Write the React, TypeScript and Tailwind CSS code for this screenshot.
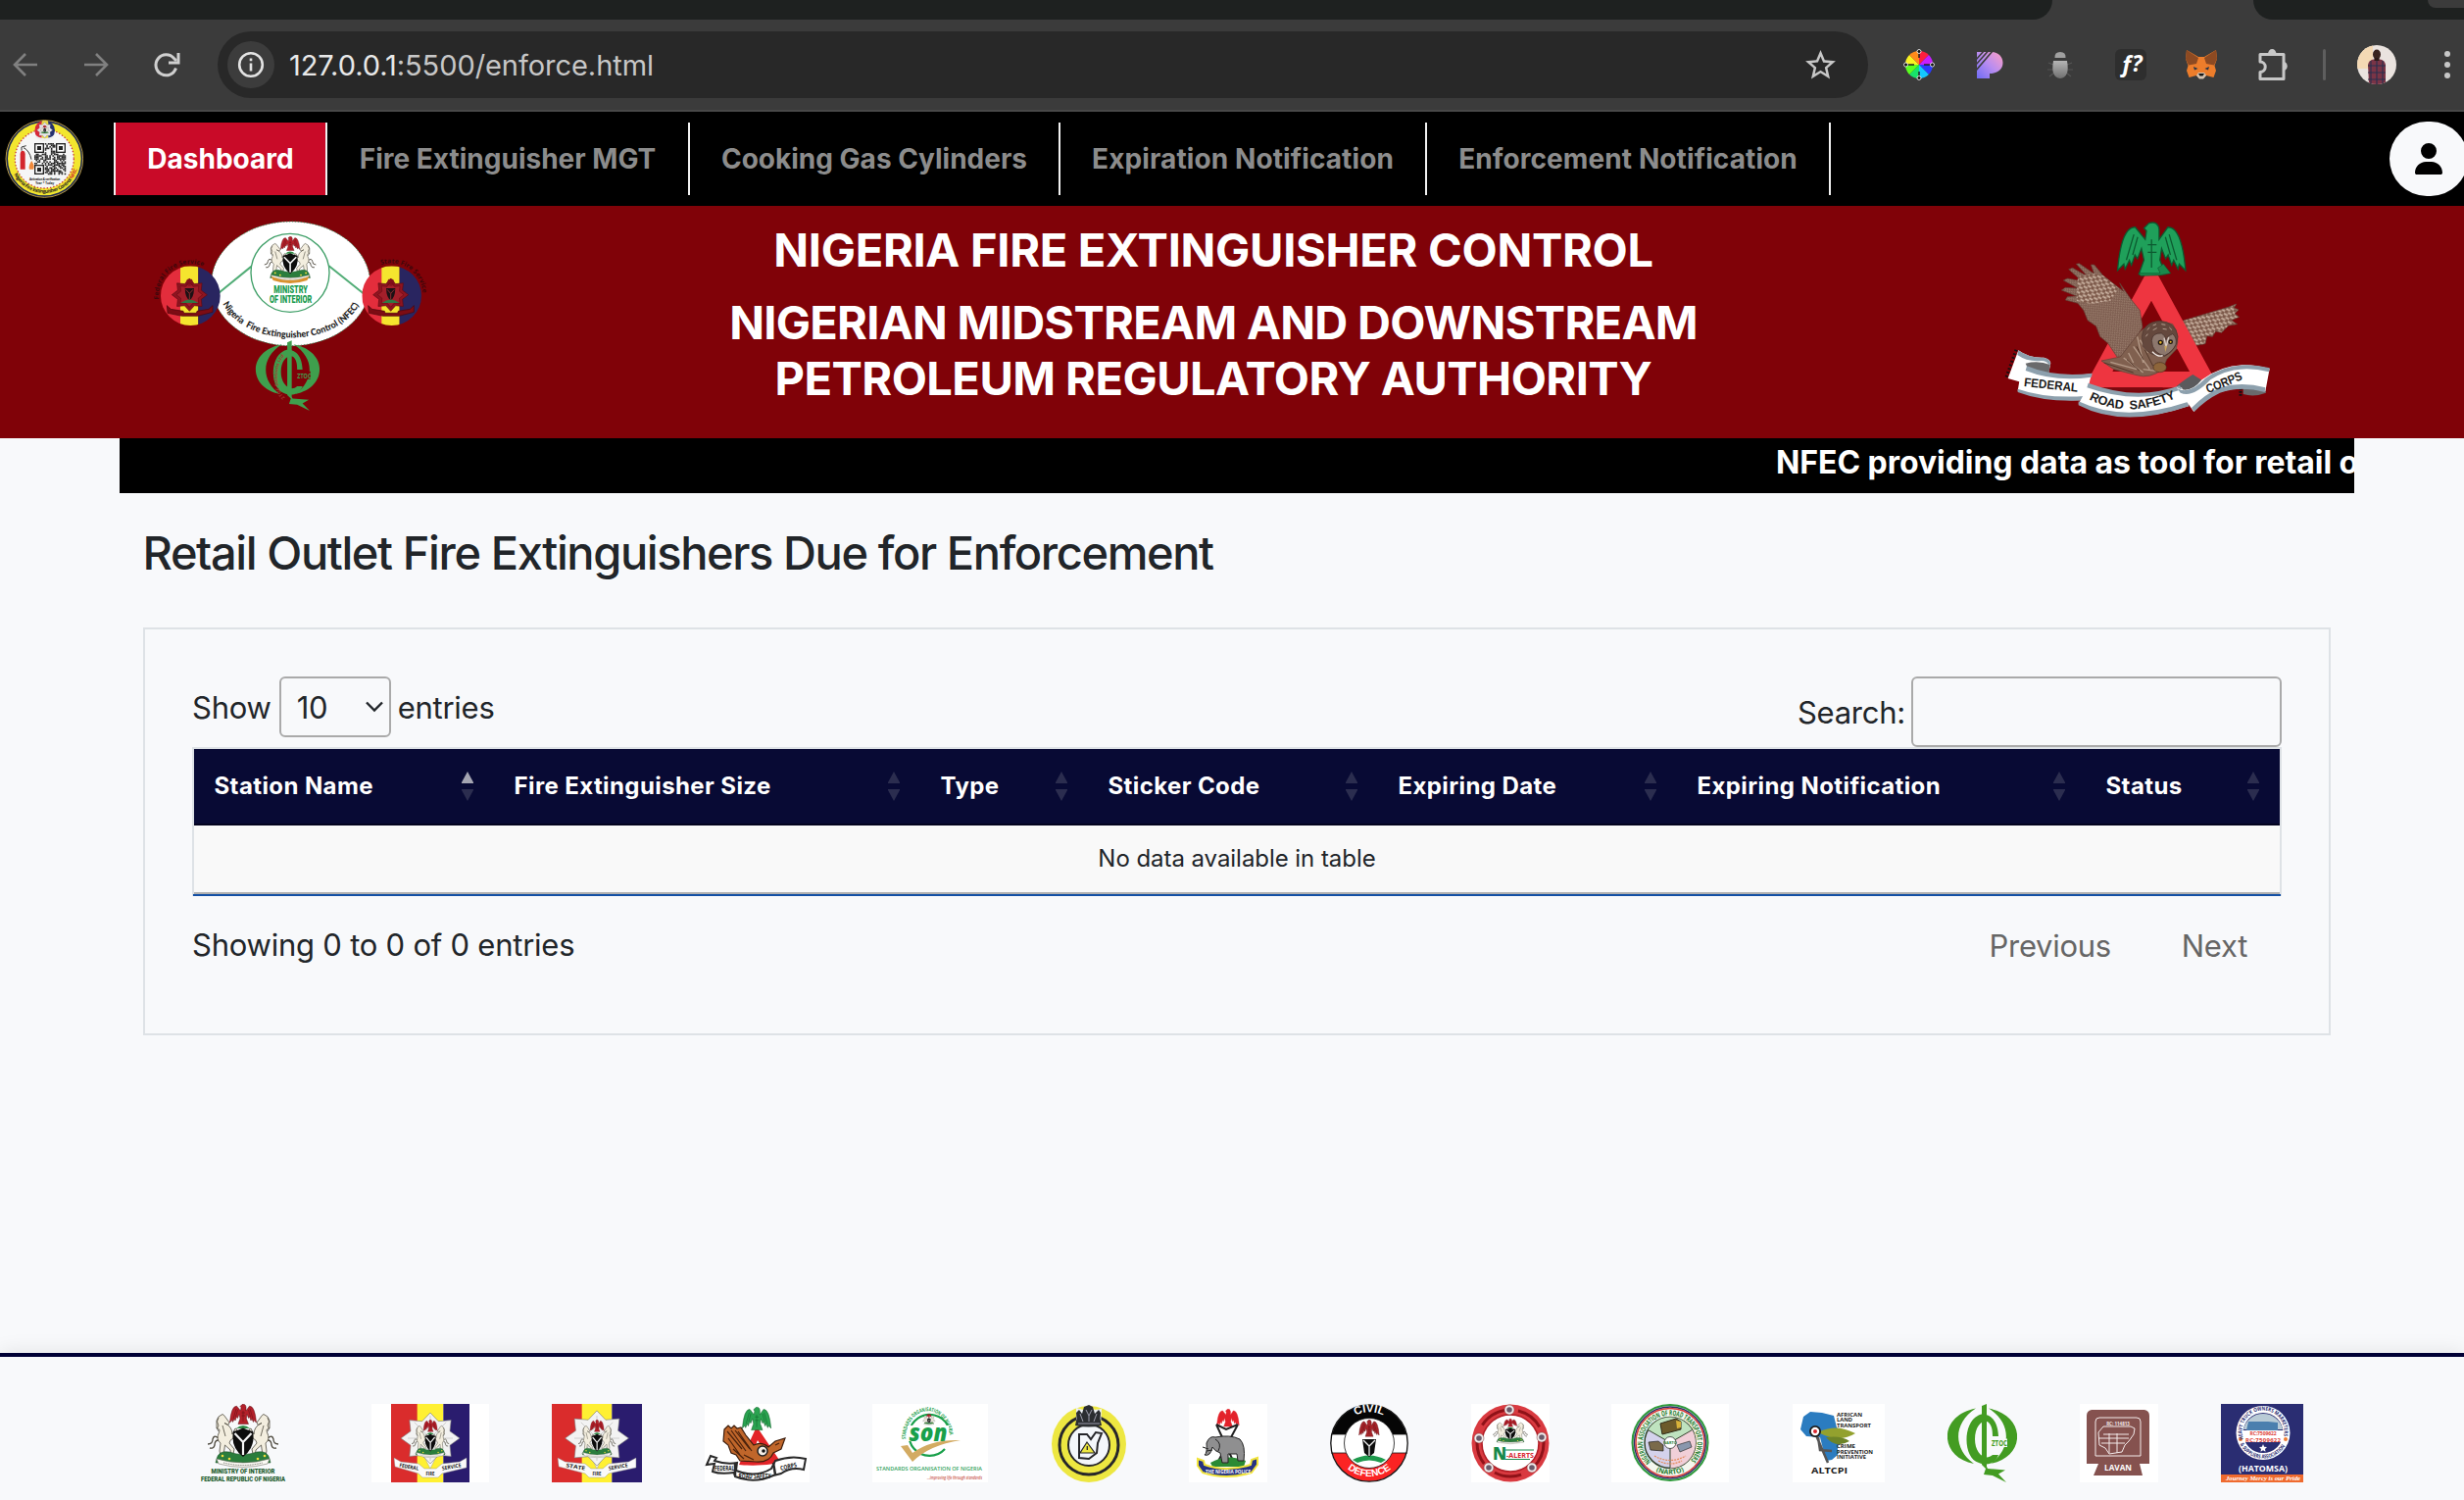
import type { ReactNode } from "react";
import { FaUser } from "react-icons/fa6";
import { MdStarBorder } from "react-icons/md";

const heading = { textAnchor: "middle" as const, fontFamily: "Open Sans, sans-serif", fontWeight: 700 };

/* ---------- shared emblem parts ---------- */

function Eagle({ color = "#b3202a", line = "#5c0c12" }: { color?: string; line?: string }) {
  return (
    <g stroke={line} strokeWidth="0.5">
      <path
        fill={color}
        d="M35 2.600 L37 .6 Q40.500 -.4 41 3 L41 7 L44.500 2.200 Q50 2 51.500 19 L49 16.500 L48.500 18.500 L46.800 15 L46 17 L44.600 13 L43.600 14.500 L42 10.500 L41.300 15 L43.500 20.500 H33 L35 15 L34 10.500 L32.400 14.500 L31.400 13 L30 17 L29.200 15 L27.500 18.500 L27 16.500 L24.500 19 Q26 2 31.500 2.200 L35.500 7 L36 3.600Z"
      />
      <path fill="none" d="M31 5 L28 15 M32.500 6 L30.500 13 M45 5 L48 15 M43.500 6 L45.500 13 M38 7 V18 M36.500 9 H40 M36.500 12 H40" />
    </g>
  );
}

function Horse() {
  return (
    <g stroke="#4d493e" strokeWidth="0.8" fill="#f3eedf" strokeLinejoin="round">
      <path fill="none" strokeWidth="1.300" d="M13 35 Q8 31 7 36 Q7 41 2 41 M13 37 Q9 37 9 42 Q8 46 4 45" />
      <path d="M11 17 L13 13 L17 10.500 L18.500 11.500 L24 19 L23 21.500 L19 19.500 Q27 23 27 31 L30 25 L32 26 L28 35 Q24 37 24 40 L29 46 L28 51 L25.500 51 L25 47 L19.500 42 L18.500 49 L19 55 H15.500 L14 48 L15 40 Q10 36 13.500 29 Q15 25 11 25Z" />
      <path fill="none" d="M13 14 Q10 18 13 22 Q10 25 13 28 M17 22 L20 33" />
    </g>
  );
}

function Coat({ eagle = "#b3202a" }: { eagle?: string }) {
  return (
    <g>
      <Horse />
      <g transform="translate(76 0) scale(-1 1)">
        <Horse />
      </g>
      <path d="M11 56 Q13 47 24 49 Q38 54 52 49 Q63 47 65 56 L66 60 H10Z" fill="#2a7d3c" stroke="#174a22" strokeWidth="0.5" />
      <g fill="#f2dc3c">
        <circle cx="17" cy="53" r="1.300" />
        <circle cx="24" cy="56" r="1.300" />
        <circle cx="53" cy="56" r="1.300" />
        <circle cx="60" cy="53" r="1.300" />
      </g>
      <path d="M31 25 Q38 19 45 25Z" fill="#2f8b47" />
      <path d="M28 28 Q33 27 38 24.500 Q43 27 48 28 Q51 44 38 54 Q25 44 28 28Z" fill="#0c0c0c" />
      <path d="M29.500 30 L38 39 L46.500 30 M38 38 V52" stroke="#f4f4f4" strokeWidth="2.200" fill="none" />
      <path d="M11 56 Q38 64 65 56 L63 61 Q38 68 13 61Z" fill="#fbfaf5" stroke="#77756b" strokeWidth="0.6" />
      <path d="M18 60 Q38 65 58 60" fill="none" stroke="#55534b" strokeWidth="0.8" strokeDasharray="1 0.7" />
      <Eagle color={eagle} />
    </g>
  );
}

function starPoints(cx: number, cy: number, rx: number, ry: number, n: number) {
  return Array.from({ length: n * 2 }, (_, i) => {
    const a = (Math.PI * i) / n - Math.PI / 2;
    const k = i % 2 ? 0.72 : 1;
    return `${(cx + Math.cos(a) * rx * k).toFixed(1)},${(cy + Math.sin(a) * ry * k).toFixed(1)}`;
  }).join(" ");
}

function Ztoc({ color }: { color: string }) {
  return (
    <g fill={color}>
      <path d="M29 4.500 C-10 12 -9 54 27 61 C6 46 5 20 29 4.500Z" />
      <path d="M42 4.500 C81 12 80 54 44 61 C65 46 66 20 42 4.500Z" />
      <path d="M52 33 C51 8 34 9 31 12 C15 20 16 56 32 60 C42 64 49 60 52 52 L46 52 C38 59 28 50 28 36 C28 20 38 15 42 19 C45 22 46 26 46 33Z" />
      <path d="M35 2 L40 0 V64 L41 66 L59 67.500 L52 71.500 L60 80 L46 73 L37 72 L39 66 L35 62Z" />
    </g>
  );
}

/* ---------- browser chrome ---------- */

function ColorWheel() {
  const colors = ["#ff1f3d", "#c61fff", "#2a3bff", "#14c8ff", "#17e36a", "#5bff1f", "#f9f321", "#ff8a1a"];
  return (
    <svg width="32" height="32" viewBox="0 0 32 32">
      {colors.map((c, i) => {
        const p = (k: number) => {
          const a = ((k * 45 - 90) * Math.PI) / 180;
          return `${16 + Math.cos(a) * 14} ${16 + Math.sin(a) * 14}`;
        };
        return <path key={c} d={`M16 16 L${p(i)} A14 14 0 0 1 ${p(i + 1)}Z`} fill={c} />;
      })}
      <path d="M16 3 V9 M16 23 V29 M3 16 H11 M21 16 H29" stroke="#222" strokeWidth="1.500" />
      {[[16, 2.500], [16, 29.500], [2.500, 16], [29.500, 16]].map(([x, y]) => (
        <circle key={`${x}-${y}`} cx={x} cy={y} r="2" fill="#111" stroke="#eee" strokeWidth="0.9" />
      ))}
    </svg>
  );
}

function BrowserBar() {
  return (
    <div className="h-[114px] bg-[#3b3b3b] border-b-2 border-[#484848]">
      <div className="flex h-5 justify-between overflow-hidden">
        <div className="w-[2094px] rounded-br-[22px] bg-[#1e2120]" />
        <div className="flex w-[215px] justify-end rounded-bl-[22px] bg-[#1e2120]">
          <div className="h-2 w-[37px] rounded-bl-[16px] bg-[#3b3b3b]" />
        </div>
      </div>
      <div className="flex h-[92px] items-center">
        <svg className="ml-3" width="172" height="28" viewBox="0 0 172 28" fill="none" strokeWidth="2.600">
          <path d="M26 14 H3 M14 3 L3 14 L14 25" stroke="#808080" />
          <path d="M74 14 H97 M86 3 L97 14 L86 25" stroke="#808080" />
          <path d="M167.500 17.500 A10.500 10.500 0 1 1 165.500 7.500 L168 10" stroke="#cfcfcf" strokeWidth="3" />
          <path d="M170 2 V12 H160" stroke="#cfcfcf" strokeWidth="3" />
        </svg>
        <div className="ml-[38px] flex h-[68px] w-[1684px] items-center rounded-full bg-[#282828] pr-[30px] pl-[10px]">
          <div className="flex size-12 items-center justify-center rounded-full bg-[#3c3c3c]">
            <svg width="28" height="28" viewBox="0 0 28 28" fill="none" stroke="#e3e3e3" strokeWidth="2.600">
              <circle cx="14" cy="14" r="11.800" />
              <path d="M14 12.500 V20.500 M14 7.500 V10.300" />
            </svg>
          </div>
          <div className="ml-[15px] text-[29px] leading-none tracking-[-0.06px] whitespace-nowrap text-[#c7c7c7]">
            <span className="text-[#e8e8e8]">127.0.0.1</span>:5500/enforce.html
          </div>
          <MdStarBorder className="ml-auto size-[37px] text-[#c7c7c7]" />
        </div>
        <div className="ml-[36px] flex flex-1 items-center">
          <ColorWheel />
          <svg className="ml-[43px]" width="27" height="27" viewBox="0 0 27 27">
            <defs>
              <linearGradient id="pg" x1="0" y1="1" x2="1" y2="0">
                <stop offset="0" stopColor="#6f6cf5" />
                <stop offset="0.500" stopColor="#b98df0" />
                <stop offset="1" stopColor="#ff9fc4" />
              </linearGradient>
            </defs>
            <path d="M0 0 H15 C22 0 26.500 5 26.500 11 C26.500 18 21 22 13 22 V27 H0Z" fill="url(#pg)" />
            <path d="M-1 8 L7 -1 M-1 13 L11.500 -1 M-1 19 L16 -1" stroke="#3b3b3b" strokeWidth="1.600" />
          </svg>
          <svg className="ml-[43px]" width="30" height="30" viewBox="0 0 30 30">
            <defs>
              <linearGradient id="bg" x1="0" y1="0" x2="0" y2="1">
                <stop offset="0" stopColor="#b5b5b5" />
                <stop offset="1" stopColor="#707070" />
              </linearGradient>
            </defs>
            <path d="M3 13 L8 15 M2 20 H8 M4 27 L9 23 M27 13 L22 15 M28 20 H22 M26 27 L21 23" stroke="#555" strokeWidth="1.200" />
            <path d="M9.500 8 Q9 2 15 2 Q21 2 20.500 8Z" fill="#a0a0a0" />
            <path d="M8 11 H22 Q25 28 15 29 Q5 28 8 11Z" fill="url(#bg)" />
          </svg>
          <div className="ml-[41px] flex size-8 items-center justify-center rounded-md bg-[#2e2e2e] font-['Open_Sans',sans-serif] text-[23px] leading-none font-bold tracking-[-1px] text-white italic">
            <span className="-mt-1">ƒ?</span>
          </div>
          <svg className="ml-10" width="32" height="30" viewBox="0 0 32 30">
            <path d="M1 0 L13 7 H19 L31 0 L32 9 L29.500 16 L31 21 L28.500 28 L21 26 L18 29 H14 L11 26 L3.500 28 L1 21 L2.500 16 L0 9Z" fill="#ed7d2b" />
            <path d="M1 0 L13 8 L11 14 L3 15.500 L0 9Z M31 0 L19 8 L21 14 L29 15.500 L32 9Z" fill="#8d4a22" />
            <path d="M8 17 L12.500 19 L9 20.500Z M24 17 L19.500 19 L23 20.500Z" fill="#23344a" />
            <path d="M11 26 L13 23 H19 L21 26 L18 29.500 H14Z" fill="#d4c2b0" />
            <path d="M13 24 H19 L17.500 26.500 H14.500Z" fill="#161616" />
          </svg>
          <svg className="ml-[41px]" width="34" height="34" viewBox="0 0 34 34">
            <path
              d="M3 6.500 H27 V31.500 H3 V24.500 A5 5 0 0 0 3 14Z"
              fill="none"
              stroke="#c7c7c7"
              strokeWidth="3"
              strokeLinejoin="round"
            />
            <path d="M11 6 A4.200 5 0 0 1 19.500 6Z M28 14 A5 5 0 0 1 28 23Z" fill="#c7c7c7" />
          </svg>
          <div className="ml-[33px] h-8 w-[3px] rounded-full bg-[#5e5e5e]" />
          <svg className="ml-[32px]" width="40" height="40" viewBox="0 0 40 40">
            <defs>
              <clipPath id="av">
                <circle cx="20" cy="20" r="20" />
              </clipPath>
            </defs>
            <g clipPath="url(#av)">
              <rect width="40" height="40" fill="#eae3df" />
              <rect width="16" height="24" fill="#f4d9b4" />
              <path d="M12 40 L11 20 Q12 15 17 14.500 H23 Q28 15 29 20 L29 40Z" fill="#7a3446" />
              <path d="M14 16 V40 M20 15 V40 M26 16 V40 M11 21 H29 M11 28 H29 M11 35 H29" stroke="#27304f" strokeWidth="1.100" />
              <ellipse cx="20" cy="9.500" rx="4" ry="5" fill="#3a241f" />
              <path d="M17.500 13 H22.500 V16 H17.500Z" fill="#2c1a17" />
            </g>
          </svg>
          <div className="ml-[49px] flex flex-col gap-[5px]">
            <div className="size-[6px] rounded-full bg-[#c7c7c7]" />
            <div className="size-[6px] rounded-full bg-[#c7c7c7]" />
            <div className="size-[6px] rounded-full bg-[#c7c7c7]" />
          </div>
        </div>
      </div>
    </div>
  );
}

/* ---------- site navigation ---------- */

// Pseudo-random but stable module pattern of the badge's QR code.
const qrCells = Array.from({ length: 21 * 21 }, (_, i) => {
  const x = i % 21;
  const y = Math.floor(i / 21);
  const inFinder = (x < 7 && y < 7) || (x > 13 && y < 7) || (x < 7 && y > 13);
  return !inFinder && (x * 7 + y * 13 + x * y * 5 + ((x * x * 3) ^ (y * 11))) % 5 < 3 ? [x, y] : null;
}).filter((c): c is number[] => c !== null);

function NavBadge() {
  return (
    <svg className="ml-[5px] shrink-0" width="80" height="84" viewBox="15 30 240 252">
      <circle cx="136" cy="156" r="118" fill="#1d2a52" stroke="#b99a42" strokeWidth="3" />
      <circle cx="136" cy="156" r="112" fill="#f2e62f" />
      <circle cx="136" cy="156" r="90" fill="#f6f6f6" stroke="#c8343c" strokeWidth="4" strokeDasharray="4 6" />
      <defs>
        <clipPath id="nb">
          <circle cx="137" cy="69" r="31" />
        </clipPath>
        <path id="nbt" d="M43 203 A105 105 0 0 0 236 190" />
      </defs>
      <g clipPath="url(#nb)">
        <rect x="106" y="38" width="22" height="62" fill="#d8283a" />
        <rect x="128" y="38" width="20" height="62" fill="#e8d84a" />
        <rect x="148" y="38" width="22" height="62" fill="#24306e" />
      </g>
      <polygon points={starPoints(137, 68, 24, 24, 8)} fill="#e9e9ee" stroke="#777" />
      <g transform="translate(121 53) scale(.42)">
        <Coat />
      </g>
      <path d="M108 84 Q137 104 166 84 L164 92 Q137 110 110 92Z" fill="#eee" />
      <g fill="#222">
        {qrCells.map(([x, y]) => (
          <rect key={`${x}-${y}`} x={105 + x * 4.6} y={108 + y * 4.6} width="4.700" height="4.700" />
        ))}
      </g>
      {[[105, 108], [171, 108], [105, 174]].map(([x, y]) => (
        <g key={`${x}-${y}`}>
          <rect x={x + 2} y={y + 2} width="26" height="26" fill="#fff" stroke="#222" strokeWidth="4" />
          <rect x={x + 9} y={y + 9} width="12" height="12" fill="#222" />
        </g>
      ))}
      <path d="M62 188 V142 Q62 132 69 131 Q77 132 77 142 V188Z" fill="#d3262c" />
      <path d="M66 131 V120 L80 116 M72 122 Q90 130 96 158" fill="none" stroke="#333" strokeWidth="3" />
      <path d="M90 188 Q86 176 97 162 Q108 180 102 188Z" fill="#f08a3c" />
      <g {...heading} fontSize="9" fill="#222">
        <text x="137" y="222" textLength="94">Activation &amp; verification</text>
        <text x="137" y="234">Year * Today</text>
      </g>
      <text fontFamily="Open Sans, sans-serif" fontWeight="700" fontSize="15" fill="#222">
        <textPath href="#nbt" textLength="248">
          Nigeria Fire Extinguisher Control <tspan fill="#d02a2a">NFEC</tspan>
        </textPath>
      </text>
    </svg>
  );
}

function NavItem({ className, children }: { className: string; children: ReactNode }) {
  return (
    <div className={`flex h-[74px] shrink-0 items-center justify-center border-r-2 border-[#f1f1f1] text-[28px] font-bold whitespace-nowrap ${className}`}>
      {children}
    </div>
  );
}

function NavBar() {
  return (
    <div className="flex h-24 items-center overflow-hidden bg-black text-[#8c8c8c]">
      <NavBadge />
      <NavItem className="ml-[31px] w-[218px] border-l-2 bg-[#c90a28] text-white">Dashboard</NavItem>
      <NavItem className="w-[370px]">Fire Extinguisher MGT</NavItem>
      <NavItem className="w-[378px]">Cooking Gas Cylinders</NavItem>
      <NavItem className="w-[374px] tracking-[0.1px]">Expiration Notification</NavItem>
      <NavItem className="w-[412px] tracking-[0.1px]">Enforcement Notification</NavItem>
      <div className="ml-[570px] flex h-[76px] w-20 shrink-0 items-center justify-center rounded-full bg-[#f8f9fb]">
        <FaUser className="h-8 w-7 text-black" />
      </div>
    </div>
  );
}

/* ---------- page header ---------- */

function FireRoundel({ cx, id, label, arc, len }: { cx: number; id: string; label: string; arc: string; len: number }) {
  return (
    <g>
      <defs>
        <clipPath id={id}>
          <circle cx={cx} cy="275" r="91" />
        </clipPath>
        <path id={`${id}-arc`} d={arc} />
      </defs>
      <g clipPath={`url(#${id})`}>
        <rect x={cx - 91} y="184" width="62" height="182" fill="#e32d3c" />
        <rect x={cx - 31} y="184" width="55" height="182" fill="#f5e52e" />
        <rect x={cx + 24} y="184" width="68" height="182" fill="#292560" />
      </g>
      <polygon points={starPoints(cx - 3, 272, 54, 50, 8)} fill="#8f1420" stroke="#5c0a10" strokeWidth="2" />
      <polygon points={starPoints(cx - 3, 272, 40, 38, 8)} fill="#a31f2a" stroke="#6b0c14" strokeWidth="2" />
      <path d={`M${cx - 17} 252 H${cx + 11} Q${cx + 10} 282 ${cx - 3} 288 Q${cx - 16} 282 ${cx - 17} 252Z`} fill="#1c1114" />
      <path d={`M${cx - 14} 256 L${cx - 3} 268 L${cx + 8} 256 M${cx - 3} 268 V286`} stroke="#8f2a30" strokeWidth="3" fill="none" />
      <path d={`M${cx - 30} 297 Q${cx - 3} 276 ${cx + 24} 297Z`} fill="#2f7a44" />
      <g transform={`translate(${cx - 34} 222) scale(.82 1.1)`}>
        <Eagle color="#8c1420" />
      </g>
      <path
        d={`M${cx - 72} 305 L${cx - 60} 316 L${cx - 22} 322 L${cx - 20} 328 H${cx + 18} L${cx + 20} 322 L${cx + 56} 316 L${cx + 68} 305 V325 L${cx + 22} 337 H${cx - 26} L${cx - 70} 328Z`}
        fill="#7d0c14"
        stroke="#4a060a"
        strokeWidth="2"
      />
      <text fontFamily="Open Sans, sans-serif" fontWeight="700" fontSize="20" fill="#3c070b">
        <textPath href={`#${id}-arc`} textLength={len}>
          {label}
        </textPath>
      </text>
    </g>
  );
}

function NfecLogo() {
  return (
    <svg className="ml-[140px] shrink-0" width="320" height="220" viewBox="0 0 960 660">
      <defs>
        <path id="nfec-arc" d="M262 300 C335 438 610 438 682 298" />
        <path id="ztoc-arc" d="M452 586 C420 560 420 480 456 454" />
      </defs>
      <ellipse cx="470" cy="238" rx="243" ry="190" fill="#fff" stroke="#2f8b57" strokeWidth="3" strokeDasharray="4 5" />
      <path d="M352 183 L248 268 M586 183 L692 268" stroke="#52ad77" strokeWidth="6" />
      <circle cx="468" cy="205" r="120" fill="#fff" stroke="#3d9e66" strokeWidth="4" />
      <g transform="translate(385 93) scale(2.190 2.120)">
        <Coat />
      </g>
      <path d="M410 215 Q468 240 526 215 L520 228 Q468 246 416 228Z" fill="#d8912e" />
      <g {...heading} fill="#169a4c" fontFamily="Roboto, sans-serif" fontSize="30" fontWeight="900">
        <text x="470" y="266" textLength="104" lengthAdjust="spacingAndGlyphs">MINISTRY</text>
        <text x="470" y="297" textLength="130" lengthAdjust="spacingAndGlyphs">OF INTERIOR</text>
      </g>
      <text fontFamily="Lato, sans-serif" fontWeight="900" fontSize="28" fill="#1b1b1b" xmlSpace="preserve">
        <textPath href="#nfec-arc" textLength="486" lengthAdjust="spacingAndGlyphs">
          {"Nigeria\u00a0 Fire Extinguisher Control (NFEC)"}
        </textPath>
      </text>
      <FireRoundel cx={163} id="fed" label="Federal Fire Service" arc="M66 286 A98 98 0 0 1 212 190" len={205} />
      <FireRoundel cx={779} id="state" label="State Fire Service" arc="M746 180 A98 98 0 0 1 874 276" len={178} />
      <g transform="translate(363 412) scale(2.750 2.690)">
        <Ztoc color="#3f9f4d" />
      </g>
      <rect x="492" y="506" width="38" height="24" fill="#800208" />
      <text x="511" y="527" {...heading} fontSize="23" fill="#3f9f4d" textLength="42" lengthAdjust="spacingAndGlyphs">ZTOC</text>
      <text fontFamily="Open Sans, sans-serif" fontWeight="700" fontSize="14" fill="#a03c30">
        <textPath href="#ztoc-arc" textLength="138">ZTOC Solutions Ltd</textPath>
      </text>
    </svg>
  );
}

function FrscLogo() {
  const feather = { stroke: "#5f4136", strokeWidth: 2, strokeLinejoin: "round" as const };
  return (
    <svg className="mr-[174px] shrink-0" width="320" height="220" viewBox="0 0 960 660">
      <defs>
        <path id="frsc-arc" d="M334 592 Q460 655 604 586" />
        <pattern id="barring" width="22" height="16" patternUnits="userSpaceOnUse" patternTransform="rotate(28)">
          <rect width="22" height="16" fill="#7d5a4b" />
          <path d="M0 4 H13 M10 12 H22" stroke="#cdb6a5" strokeWidth="5" />
        </pattern>
        <pattern id="speckle" width="10" height="10" patternUnits="userSpaceOnUse" patternTransform="rotate(50)">
          <rect width="10" height="10" fill="#7d5d50" />
          <path d="M0 3 H6 M5 8 H10" stroke="#ab8f7e" strokeWidth="2" />
        </pattern>
      </defs>
      {/* far wing */}
      <path
        d="M590 375 L625 350 L760 310 L785 300 L778 312 L792 318 L780 330 L794 340 L770 350 L788 362 L762 366 L740 388 L722 384 L712 400 L695 398 L690 422 L655 428 L590 440Z"
        fill="url(#barring)"
        {...feather}
      />
      {/* triangle */}
      <path fillRule="evenodd" d="M505 213 H546 L716 525 L690 556 H322 L332 532Z M525 290 L406 507 H642Z" fill="#ee3540" />
      <path d="M360 556 H560 V566 H380Z" fill="#7a0a10" />
      {/* green eagle */}
      <g transform="translate(233 48) scale(7.700 7.850)">
        <Eagle color="#1fa05a" line="#0c5a30" />
      </g>
      <path d="M486 206 H552 L545 190 L562 178 L584 206 L552 212 L492 214Z" fill="#1a8a4c" stroke="#0c5a30" strokeWidth="2" />
      {/* near wing */}
      <path
        d="M428 236 L462 285 L490 320 L498 372 L480 400 L450 460 L420 462 L392 420 L368 400 L356 368 L330 350 L318 320 L300 298 L262 288 L268 278 L296 276 L250 258 L262 250 L300 252 L256 228 L268 222 L312 230 L272 194 L284 190 L330 216 L295 178 L304 176 L350 208 L340 180 L350 180 L378 214 L440 262Z"
        fill="url(#speckle)"
        {...feather}
      />
      <path d="M300 215 L350 208 L378 214 L425 252 L400 290 L340 300 L296 290Z" fill="url(#barring)" />
      {/* body and head */}
      <path d="M372 474 L430 462 L490 385 Q540 340 590 362 Q615 395 600 440 L572 470 L560 500 Q520 530 480 518 L410 500 Z" fill="#80604f" {...feather} />
      <path
        d="M400 478 L480 500 M440 465 L500 510 M470 430 L520 500 M490 410 L515 450 M455 450 L470 480 M482 400 L500 480 M500 500 L545 506"
        stroke="#b49a88"
        strokeWidth="4"
      />
      <path d="M380 480 L470 510 M450 470 L490 505 M480 430 L500 470 M505 440 L530 490" stroke="#513528" strokeWidth="3" />
      <path d="M496 400 Q500 356 550 352 Q600 356 606 400 Q604 440 566 460 Q520 462 500 430Z" fill="#64483d" stroke="#4f372f" strokeWidth="2" />
      <path d="M512 380 L520 372 M530 366 L540 362 M556 362 L568 364 M580 372 L588 380 M508 400 L514 392 M530 380 L542 374 M560 376 L572 378" stroke="#b79f90" strokeWidth="3" />
      <path d="M526 412 Q528 388 556 390 Q568 396 570 410 Q574 396 590 392 Q604 402 600 424 Q590 446 566 458 Q528 452 526 412Z" fill="#8c776d" stroke="#3f2b25" strokeWidth="2" />
      <path d="M564 404 L570 432 L578 402" stroke="#d9cdc5" strokeWidth="4" fill="none" />
      <circle cx="553" cy="418" r="6" fill="#e6b52d" stroke="#1c1512" strokeWidth="4" />
      <circle cx="584" cy="416" r="5" fill="#e6b52d" stroke="#1c1512" strokeWidth="4" />
      <path d="M565 428 L573 428 L568 448Z" fill="#caa55a" />
      <path d="M528 446 Q546 464 560 458" stroke="#f3ede8" strokeWidth="4" fill="none" />
      <ellipse cx="551" cy="494" rx="20" ry="15" fill="#8d653a" stroke="#4a3020" strokeWidth="3" strokeDasharray="4 2" />
      {/* ribbon */}
      <path d="M118 442 Q150 466 196 464 Q220 470 216 486 L210 514 L140 498 L128 540 L86 528Z" fill="#fff" />
      <path d="M118 442 Q150 466 196 464 Q222 470 215 490 Q205 474 188 474 Q146 478 115 456Z" fill="#8da0ad" />
      <path d="M140 482 Q180 472 215 486 L211 516 Q170 505 146 496Z" fill="#6a6a6c" />
      <path d="M118 442 L86 532" stroke="#111" strokeWidth="9" strokeDasharray="5 7" transform="translate(-7 -2)" />
      <path d="M144 496 Q230 530 342 514 L322 594 Q200 600 116 566 L128 494Z" fill="#fff" />
      <path d="M144 490 Q230 526 344 512 L342 524 Q230 540 140 504Z M116 560 Q200 590 322 582 V595 Q200 602 116 570Z" fill="#8da0ad" />
      <path d="M690 540 L652 516 Q620 536 602 552 L640 600Z" fill="#5a5a5c" />
      <path d="M334 548 Q480 606 618 556 L640 612 Q440 680 302 606Z" fill="#fff" />
      <path d="M332 542 Q480 598 612 550 L618 562 Q480 610 328 556Z M302 598 Q440 665 636 600 L640 613 Q440 682 302 610Z" fill="#8da0ad" />
      <path d="M806 545 H870 L876 572 Q840 586 806 576Z" fill="#6a6a6c" />
      <path d="M798 558 V582" stroke="#111" strokeWidth="9" strokeDasharray="5 4" />
      <path d="M602 555 Q640 580 680 532 Q770 464 887 498 L874 568 Q800 548 735 570 Q690 590 655 630Z" fill="#fff" />
      <path d="M604 558 Q640 580 690 528 Q770 468 887 496 L885 508 Q780 482 706 532 Q650 590 614 572Z M874 556 L872 570 Q800 550 735 572 Q690 594 656 630 L648 618 Q690 576 735 556 Q800 536 874 556Z" fill="#8da0ad" />
      <g fontFamily="Liberation Sans, sans-serif" fontWeight="700" fill="#1c1c1c">
        <text x="134" y="552" fontSize="38" textLength="166" lengthAdjust="spacingAndGlyphs" transform="rotate(6 134 552)">FEDERAL</text>
        <text fontSize="38">
          <textPath href="#frsc-arc" textLength="276">{"ROAD\u00a0 SAFETY"}</textPath>
        </text>
        <text x="698" y="574" fontSize="38" textLength="116" lengthAdjust="spacingAndGlyphs" transform="rotate(-22 698 574)">CORPS</text>
      </g>
    </svg>
  );
}

function Header() {
  return (
    <header className="flex h-[237px] justify-between bg-[#800208]">
      <NfecLogo />
      <div className="-ml-[4px] pt-4 text-center text-[47px] leading-[57.6px] font-bold whitespace-nowrap text-white">
        <div className="tracking-[-0.3px]">NIGERIA FIRE EXTINGUISHER CONTROL</div>
        <div className="mt-4 tracking-[-0.72px]">NIGERIAN MIDSTREAM AND DOWNSTREAM</div>
        <div className="tracking-[-0.54px]">PETROLEUM REGULATORY AUTHORITY</div>
      </div>
      <FrscLogo />
    </header>
  );
}

/* ---------- table ---------- */

function SortIcon({ active }: { active?: boolean }) {
  return (
    <svg className="ml-auto shrink-0" width="12" height="30" viewBox="0 0 12 30">
      <path d="M6 0 L12 11 V12 H0 V11Z" fill={active ? "#a4a5b2" : "#2b2d4f"} />
      <path d="M0 18 H12 V19 L6 30 L0 19Z" fill="#2b2d4f" />
    </svg>
  );
}

const columns = [
  { label: "Station Name", width: "w-[306px]", active: true },
  { label: "Fire Extinguisher Size", width: "w-[435px]" },
  { label: "Type", width: "w-[171px]" },
  { label: "Sticker Code", width: "w-[296px]" },
  { label: "Expiring Date", width: "w-[305px]" },
  { label: "Expiring Notification", width: "w-[417px]" },
  { label: "Status", width: "w-[198px]" },
];

function TableCard() {
  return (
    <section className="mt-[47px] ml-[146px] h-[416px] w-[2232px] border-2 border-[#dee2e6] px-12 pt-12">
      <div className="flex h-[72px] justify-between text-[31px] leading-none tracking-[-0.25px]">
        <div className="flex h-[62px] items-center">
          Show
          <div className="ml-[8px] flex h-[62px] w-[114px] items-center justify-between rounded-md border-2 border-[#aaa] pr-[6px] pl-4">
            10
            <svg width="18" height="12" viewBox="0 0 18 12" fill="none" stroke="#212529" strokeWidth="2.400">
              <path d="M1 1.500 L9 9.500 L17 1.500" />
            </svg>
          </div>
          <span className="ml-[7px]">entries</span>
        </div>
        <div className="flex items-center">
          Search:
          <div className="ml-[6px] h-[72px] w-[378px] rounded-md border-2 border-[#aaa]" />
        </div>
      </div>
      <div className="h-[152px] border-x-2 border-t-2 border-[#dee2e6]">
        <div className="flex h-[78px] border-b-2 border-[#03031f] bg-[#080a34]">
          {columns.map((c) => (
            <div
              key={c.label}
              className={`flex shrink-0 items-center pr-[21px] pl-[20.5px] text-[24px] leading-none font-bold tracking-[0.4px] whitespace-nowrap text-white ${c.width}`}
            >
              {c.label}
              <SortIcon active={c.active} />
            </div>
          ))}
        </div>
        <div className="flex h-[70px] items-center justify-center border-b-2 border-[#b0b0b0] bg-[#f9f9f9] text-[24px] leading-none tracking-[-0.05px]">
          No data available in table
        </div>
        <div className="-mx-px h-[2px] bg-[#1450a5]" />
      </div>
      <div className="mt-[32px] flex items-start justify-between pr-[35px] text-[31px] leading-9 tracking-[-0.23px]">
        <div>Showing 0 to 0 of 0 entries</div>
        <div className="flex gap-[72px] pt-px text-[#666] tracking-[-0.3px]">
          <span>Previous</span>
          <span>Next</span>
        </div>
      </div>
    </section>
  );
}

/* ---------- partner logos ---------- */

function Logo({ w, gap, white, children }: { w: number; gap: string; white?: boolean; children: ReactNode }) {
  return (
    <svg className={`shrink-0 ${gap}`} width={w} height="80" viewBox={`0 0 ${w} 80`}>
      {white && <rect width={w} height="80" fill="#fff" />}
      {children}
    </svg>
  );
}

function FireService({ x, w, scale, left }: { x: number; w: number; scale: number; left: string }) {
  const c = x + w / 2;
  return (
    <g>
      <rect x={x} width={w / 3 + 1} height="80" fill="#da2c2c" />
      <rect x={x + w / 3} width={w / 3} height="80" fill="#fff032" />
      <rect x={x + (w * 2) / 3} width={w / 3} height="80" fill="#2a1c6e" />
      <path d={`M${c - 8} 50 H${c + 8} L${c} 66Z`} fill="#fafafa" stroke="#888" strokeWidth="0.4" />
      <polygon points={starPoints(c, 35, 30 * scale, 26 * scale, 8)} fill="#f3f3f3" stroke="#777" strokeWidth="0.6" />
      {[0, 45, 90, 135].map((a) => (
        <path key={a} d={`M${c - 23} 35 H${c + 23}`} transform={`rotate(${a} ${c} 35)`} stroke="#bbb" strokeWidth="0.6" />
      ))}
      <g transform={`translate(${c - 20} 16) scale(.53 .6)`}>
        <Coat />
      </g>
      <path
        d={`M${c - 37 * scale} 55 L${c - 30 * scale} 59 L${c - 12} 61 L${c - 6} 66 H${c + 6} L${c + 12} 61 L${c + 30 * scale} 59 L${c + 37 * scale} 55 V65 L${c + 12} 71 L${c + 8} 75 H${c - 8} L${c - 12} 71 L${c - 36 * scale} 64Z`}
        fill="#fafafa"
        stroke="#888"
        strokeWidth="0.4"
      />
      <g {...heading} fontSize="5.500" fill="#222">
        <text x={c - 22} y="66" transform={`rotate(10 ${c - 22} 66)`} textLength="20" lengthAdjust="spacingAndGlyphs">{left}</text>
        <text x={c} y="73" textLength="9" lengthAdjust="spacingAndGlyphs">FIRE</text>
        <text x={c + 22} y="66" transform={`rotate(-10 ${c + 22} 66)`} textLength="20" lengthAdjust="spacingAndGlyphs">SERVICE</text>
      </g>
    </g>
  );
}

function Footer() {
  return (
    <footer className="flex h-[150px] border-t-4 border-[#000035] bg-[#f8f9fb] pt-12 shadow-[0_0_20px_rgba(0,0,0,0.1)]">
      <Logo w={90} gap="ml-[203px]">
        <g transform="translate(7 0)">
          <Coat />
        </g>
        <g {...heading} fill="#1c5a2c" fontWeight="900" fontFamily="Roboto, sans-serif" fontSize="7.500">
          <text x="45" y="70.500" textLength="65" lengthAdjust="spacingAndGlyphs">MINISTRY OF INTERIOR</text>
          <text x="45" y="79" textLength="86" lengthAdjust="spacingAndGlyphs">FEDERAL REPUBLIC OF NIGERIA</text>
        </g>
      </Logo>

      <Logo w={120} gap="ml-[86px]" white>
        <FireService x={20} w={80} scale={1} left="FEDERAL" />
      </Logo>

      <Logo w={92} gap="ml-[64px]">
        <FireService x={0} w={92} scale={1.08} left="STATE" />
      </Logo>

      <Logo w={107} gap="ml-[64px]" white>
        <path fillRule="evenodd" d="M53 23 L78 60 Q56 64 35 62Z M54 37 L46 56 H66Z" fill="#e32428" />
        <g transform="translate(12 3) scale(1.080 1.150)">
          <Eagle color="#2aa350" line="#12632c" />
        </g>
        <path d="M20 26 L24 22 L27 25 L30 22 L33 25 L37 24 L42 32 L50 42 Q58 38 65 44 L72 38 L82 35 L78 46 L70 50 Q66 60 52 59 L36 58 L32 52 L27 50 L24 42 L19 38Z" fill="#c0662a" stroke="#3b1d0c" strokeWidth="1.200" />
        <path d="M23 28 L38 46 M27 27 L42 48 M31 27 L46 46 M24 35 L36 52 M34 28 L48 48 M29 46 L40 56 M40 52 L50 57 M72 42 L76 40" stroke="#4a220c" strokeWidth="1.200" />
        <circle cx="59" cy="48" r="5" fill="#f5efe6" stroke="#222" strokeWidth="1.500" />
        <circle cx="60" cy="48" r="1.800" fill="#111" />
        <path d="M2 62 L6 53 L12 55 L10 58 Q22 62 33 60 L32 68 Q52 76 68 66 L72 58 Q88 52 103 56 L101 67 Q88 64 78 71 L70 73 Q50 82 31 74 L30 70 Q16 72 8 69 L10 61Z" fill="#fff" stroke="#2a2a2a" strokeWidth="2" />
        <path d="M31 60 L31 73 M70 60 L72 72" stroke="#2a2a2a" strokeWidth="2.500" />
        <g {...heading} fontSize="6.500" fill="#222">
          <text x="20" y="67.500" textLength="20" lengthAdjust="spacingAndGlyphs">FEDERAL</text>
          <text x="51" y="75.500" textLength="33" lengthAdjust="spacingAndGlyphs">ROAD SAFETY</text>
          <text x="86" y="66" transform="rotate(-14 86 66)" textLength="17" lengthAdjust="spacingAndGlyphs">CORPS</text>
        </g>
      </Logo>

      <Logo w={118} gap="ml-[64px]" white>
        <defs>
          <path id="son-arc" d="M34 36 A22 28 0 0 1 79 36" />
        </defs>
        <path d="M77 22 A21 21 0 1 0 74 46" fill="none" stroke="#19a04b" strokeWidth="2.200" />
        <text fontFamily="Open Sans, sans-serif" fontWeight="700" fontSize="5.500" fill="#19a04b">
          <textPath href="#son-arc" textLength="76" lengthAdjust="spacingAndGlyphs">STANDARDS ORGANISATION OF NIGERIA</textPath>
        </text>
        <g transform="translate(51 10) scale(.18)">
          <Coat />
        </g>
        <rect x="36" y="22" width="42" height="16" fill="#fff" />
        <text x="57" y="37.500" {...heading} fontSize="25" fontWeight="800" fontStyle="italic" fill="#19a04b" textLength="39" lengthAdjust="spacingAndGlyphs">son</text>
        <path d="M29 43 L36 42 L41 50 Q60 36 90 37 Q58 42 41 59Z" fill="#d3ab62" />
        <text x="58" y="67.500" {...heading} fontWeight="600" fontSize="6" fill="#2fa35c" textLength="108" lengthAdjust="spacingAndGlyphs">STANDARDS ORGANISATION OF NIGERIA</text>
        <text x="84" y="77" {...heading} fontWeight="600" fontStyle="italic" fontSize="5" fill="#c9554a" textLength="56" lengthAdjust="spacingAndGlyphs">...improving life through standards</text>
      </Logo>

      <Logo w={76} gap="ml-[65px]">
        <ellipse cx="38" cy="41" rx="38" ry="39" fill="#ede741" />
        <circle cx="38" cy="42" r="30" fill="#ede741" stroke="#26262a" strokeWidth="3" />
        <circle cx="38" cy="42" r="21" fill="#f4f7fb" stroke="#26262a" strokeWidth="2" />
        <path d="M28 31 H36 L40 36 L45 29 L51 30 L47 40 L46 50 L38 56 L28 55Z" fill="none" stroke="#26262a" strokeWidth="2" />
        <path d="M36 39 L44 50 H29Z" fill="#ede741" stroke="#26262a" strokeWidth="1.200" />
        <path d="M36.300 43 V47" stroke="#26262a" strokeWidth="1.300" />
        <path d="M25 4 L32 6 L38 1 L44 6 L51 5 L50 22 H25Z" fill="#eef1f4" />
        <path d="M24 22 L25.500 15 L25 9 L28 6 L31 10 L33 3 L38 1 L42 3 L44 10 L48 6 L50 9 L49.500 15 L51 22 Q38 25 24 22Z" fill="#2b2d31" />
        <path d="M29 10 L32 18 M46 10 L43 18 M35 6 L38 12 L41 6 M27 20 H49 M38 12 V18" stroke="#aab" strokeWidth="0.9" fill="none" />
      </Logo>

      <Logo w={80} gap="ml-[64px]" white>
        <g transform="translate(8 5) scale(.840 .88)">
          <Eagle color="#e3222b" line="#e3222b" />
        </g>
        <path d="M28 21 L46 60 M50 21 L28 62 M28 21 L38 26 L50 21" stroke="#222" strokeWidth="2" fill="none" />
        <path d="M22 60 Q38 50 58 58 L56 64 H24Z" fill="#2a8a34" />
        <path d="M18 40 Q21 32 27 34 Q42 31 52 36 Q58 42 56 58 H50 L49 51 H40 V60 H34 L32 50 Q26 48 24 44 Q22 54 16 52 Q19 50 18 40Z" fill="#8f8f90" stroke="#222" strokeWidth="1" />
        <path d="M27 36 Q34 40 30 48 M20 46 L14 44 M24 47 L18 48" stroke="#222" strokeWidth="1" fill="none" />
        <path d="M9 56 L15 58 L16 62 Q38 70 63 62 L64 57 L70 55 V62 L64 70 Q38 78 14 70 L9 63Z" fill="#263282" stroke="#f2e43a" strokeWidth="2" />
        <text x="40" y="70.500" {...heading} fontSize="5.500" fill="#fff" textLength="46" lengthAdjust="spacingAndGlyphs">THE NIGERIA POLICE</text>
      </Logo>

      <Logo w={80} gap="ml-[64px]">
        <defs>
          <clipPath id="cd">
            <circle cx="40" cy="40" r="39" />
          </clipPath>
          <path id="cd-top" d="M13 24 A31 31 0 0 1 67 24" />
          <path id="cd-bottom" d="M12 60 A35 35 0 0 0 68 60" />
        </defs>
        <g clipPath="url(#cd)">
          <rect width="80" height="80" fill="#fff" />
          <rect width="80" height="31" fill="#050505" />
          <rect y="50" width="80" height="30" fill="#fb2323" />
        </g>
        <circle cx="40" cy="40" r="39.200" fill="none" stroke="#111" strokeWidth="1.300" />
        <path d="M1 31 H79 M1 50 H79" stroke="#111" strokeWidth="0.8" />
        <circle cx="40" cy="40" r="25.500" fill="#fff" stroke="#111" strokeWidth="0.8" />
        <path d="M23 57 Q40 48 57 57 L52 60 Q40 55 28 60Z" fill="#1f9a4d" />
        <path d="M33 36 H47 L45 50 L40 54 L35 50Z" fill="#0c0c0c" />
        <path d="M34 37 L40 43 L46 37 M40 43 V53" stroke="#eee" strokeWidth="1.300" fill="none" />
        <g transform="translate(11 16) scale(.76 .84)">
          <Eagle color="#a8242a" />
        </g>
        <g fontFamily="Liberation Sans, sans-serif" fontWeight="700" fill="#fff" textAnchor="middle">
          <text fontSize="11.500">
            <textPath href="#cd-top" startOffset="50%">CIVIL</textPath>
          </text>
          <text fontSize="10">
            <textPath href="#cd-bottom" startOffset="50%">DEFENCE</textPath>
          </text>
        </g>
      </Logo>

      <Logo w={80} gap="ml-[64px]" white>
        <circle cx="40" cy="40" r="39.500" fill="#d93a40" />
        <circle cx="40" cy="40" r="34" fill="none" stroke="#8f1218" strokeWidth="3" strokeDasharray="28 14" />
        <circle cx="40" cy="40" r="29" fill="#fff" stroke="#b01c24" strokeWidth="1.500" />
        {[[39, 6], [8, 35], [72, 34], [18, 65], [62, 65]].map(([x, y]) => (
          <g key={`${x}-${y}`}>
            <circle cx={x} cy={y} r="5" fill="#f3ecec" stroke="#7a4040" strokeWidth="0.5" />
            <circle cx={x} cy={y} r="2.800" fill="#6a5a6a" />
          </g>
        ))}
        <g transform="translate(21 15) scale(.5 .4)">
          <Coat />
        </g>
        <text x="29" y="57" {...heading} fontSize="17" fontWeight="800" fill="#17894a">N</text>
        <path d="M35 47 H64 M35 56.500 H60" stroke="#17894a" strokeWidth="1" />
        <text x="50" y="54.500" {...heading} fontSize="6.500" fill="#d8272e" textLength="28" lengthAdjust="spacingAndGlyphs">-ALERTS</text>
      </Logo>

      <Logo w={120} gap="ml-[63px]" white>
        <defs>
          <path id="na-arc" d="M40.500 59 A27.700 27.700 0 1 1 79.500 59" />
          <path id="na-bot" d="M42 66.500 A33 33 0 0 0 78 66.500" />
        </defs>
        <circle cx="60" cy="39.500" r="38.500" fill="#f4f7ee" stroke="#2e9a3c" strokeWidth="2" />
        <circle cx="60" cy="39.500" r="36.500" fill="none" stroke="#262f6a" strokeWidth="1.500" />
        <circle cx="60" cy="39.500" r="35" fill="none" stroke="#d83838" strokeWidth="1.500" />
        <circle cx="60" cy="39.500" r="26" fill="#d4d2ec" stroke="#33432c" strokeWidth="1.500" />
        <path d="M60 39.500 L37.500 26.500 A26 26 0 0 1 82.500 26.500Z" fill="#bfe3bf" />
        <path d="M60 39.500 L82.500 26.500 A26 26 0 0 1 60 65.500Z" fill="#f1cfd8" />
        <path d="M60 39.500 L37.500 26.500 M60 39.500 L82.500 26.500 M60 39.500 V65" stroke="#33432c" strokeWidth="1" />
        <path d="M50 20 L66 15 L71 18 V26 L52 31Z" fill="#6c5a2a" stroke="#302a18" />
        <path d="M66 17 L71 18 V24 L67 25Z" fill="#d8b23a" />
        <path d="M38 39 L48 38 L53 42 V48 L40 47Z" fill="#7a6a4a" stroke="#222" strokeWidth="0.7" />
        <path d="M67 42 L80 38 L82 44 L70 49Z" fill="#8a97ad" stroke="#333" strokeWidth="0.7" />
        <circle cx="60" cy="39.500" r="6" fill="#fff" stroke="#333" strokeWidth="0.8" />
        <path d="M44 53 Q60 62 76 53 M48 58 Q60 64 72 58" stroke="#e58a5a" strokeWidth="1.200" fill="none" strokeDasharray="2 1" />
        <text x="60" y="41" {...heading} fontSize="3.800" fill="#2b7a35">NARTO</text>
        <g fontFamily="Open Sans, sans-serif" fontWeight="700" fill="#1b7a2c">
          <text fontSize="7.500">
            <textPath href="#na-arc" textLength="128" lengthAdjust="spacingAndGlyphs">NIGERIAN ASSOCIATION OF ROAD TRANSPORT OWNERS</textPath>
          </text>
          <text fontSize="7" textAnchor="middle">
            <textPath href="#na-bot" startOffset="50%">(NARTO)</textPath>
          </text>
        </g>
      </Logo>

      <Logo w={94} gap="ml-[65px]" white>
        <path d="M11 13 L18 8 L30 9 L42 12 L45 24 L52 30 L46 42 V52 L40 57 L34 58 L30 42 L28 34 L14 33 L8 26Z" fill="#2b7cc0" />
        <path d="M28 28 Q45 20 64 30 Q48 40 28 30Z" fill="#93a12e" />
        <path d="M34 34 Q50 32 58 38 Q44 46 34 34Z" fill="#6d8428" />
        <path d="M24 32 L36 60 M26 34 L28 47 L40 48" stroke="#555" strokeWidth="2.500" fill="none" />
        <circle cx="23" cy="28" r="6" fill="#1c1c1c" />
        <circle cx="23" cy="28" r="4.200" fill="#fff" />
        <circle cx="23" cy="28" r="2" fill="#d8272e" />
        <g fontFamily="Open Sans, sans-serif" fontWeight="700" fontSize="6" fill="#1b1b1b">
          <text x="45" y="12.500" textLength="26" lengthAdjust="spacingAndGlyphs">AFRICAN</text>
          <text x="45" y="18" textLength="16" lengthAdjust="spacingAndGlyphs">LAND</text>
          <text x="45" y="23.500" textLength="35" lengthAdjust="spacingAndGlyphs">TRANSPORT</text>
          <text x="45" y="45" textLength="19" lengthAdjust="spacingAndGlyphs">CRIME</text>
          <text x="45" y="50.500" textLength="37" lengthAdjust="spacingAndGlyphs">PREVENTION</text>
          <text x="45" y="56" textLength="30" lengthAdjust="spacingAndGlyphs">INITIATIVE</text>
          <text x="19" y="71" fontSize="9.500" textLength="37" lengthAdjust="spacingAndGlyphs">ALTCPI</text>
        </g>
      </Logo>

      <Logo w={71} gap="ml-[64px]">
        <Ztoc color="#439c22" />
        <rect x="45" y="35.500" width="16" height="8.500" fill="#f8f9fb" />
        <text x="53" y="43" {...heading} fontSize="9" fill="#439c22" textLength="16" lengthAdjust="spacingAndGlyphs">ZTOC</text>
      </Logo>

      <Logo w={80} gap="ml-[64px]" white>
        <path d="M12 6 H66 Q71 7 71 12 V61 H61 L64 73 H14 L19 61 H7 V12 Q7 7 12 6Z" fill="#85524f" />
        <path d="M16 18 Q16 14 20 14 H58 Q62 14 62 18 V53 H16Z" fill="none" stroke="#f3eaea" strokeWidth="1" />
        <path d="M19 29 L24 23 H52 L56 25 L55 31 L50 38 L46 42 L43 49 L30 51 L26 45 L20 42Z M19 35 H50 M30 30 V50 M38 30 V50 M22 40 H46 M24 31 H50" fill="none" stroke="#f3eaea" strokeWidth="1" />
        <text x="39" y="21.500" {...heading} fontSize="4.500" fill="#f3eaea">RC: 114813</text>
        <text x="39" y="67.500" {...heading} fontSize="9" fill="#fff" textLength="28" lengthAdjust="spacingAndGlyphs">LAVAN</text>
      </Logo>

      <Logo w={84} gap="ml-[64px]">
        <defs>
          <path id="ht" d="M23 36 A21.500 21.500 0 1 1 63 36" />
          <path id="hb" d="M19.500 41 A26.200 26.200 0 0 0 66.500 41" />
        </defs>
        <rect width="84" height="80" fill="#2a2d72" />
        <circle cx="43" cy="29.500" r="27.500" fill="#fff" />
        <circle cx="43" cy="29.500" r="20.500" fill="#2a2d72" />
        <path d="M23 26 A20.500 20.500 0 0 1 63 26Z" fill="#b9cbd6" />
        <path d="M28 18 H48 L58 19 V27 H26Z" fill="#4b7fae" />
        <rect x="22" y="27" width="42" height="12" fill="#fff" />
        <g {...heading} fill="#dc3b33">
          <text x="43" y="32" fontSize="5" textLength="27">RC:7509622</text>
          <text x="43" y="38.500" fontSize="6" textLength="36">RC:7509622</text>
        </g>
        <path d="M43 41 L44.200 43.700 L47 44 L45 46 L45.500 48.800 L43 47.300 L40.500 48.800 L41 46 L39 44 L41.800 43.700Z" fill="#fff" />
        <circle cx="20" cy="36" r="2" fill="#ef7d32" />
        <circle cx="66" cy="36" r="2" fill="#ef7d32" />
        <g fontFamily="Open Sans, sans-serif" fontWeight="700" fontSize="5.500" fill="#2a2d72">
          <text>
            <textPath href="#ht" textLength="80" lengthAdjust="spacingAndGlyphs">HEAVY TRUCK OWNERS MARKETERS</textPath>
          </text>
          <text>
            <textPath href="#hb" textLength="56" lengthAdjust="spacingAndGlyphs">&amp; SUPPLIERS ASSOCIATION</textPath>
          </text>
        </g>
        <text x="43" y="68.500" {...heading} fontSize="9.500" fill="#fff" textLength="50" lengthAdjust="spacingAndGlyphs">(HATOMSA)</text>
        <rect y="72" width="84" height="8" fill="#ef6a2e" />
        <text x="43" y="78" textAnchor="middle" fontFamily="Liberation Serif, serif" fontStyle="italic" fontWeight="700" fontSize="7" fill="#fff" textLength="76" lengthAdjust="spacingAndGlyphs">Journey Mercy is our Pride</text>
      </Logo>
    </footer>
  );
}

export default function App() {
  return (
    <div className="flex h-[1530px] w-[2514px] flex-col overflow-hidden bg-[#f8f9fb] font-[Inter,sans-serif] text-[#212529]">
      <BrowserBar />
      <NavBar />
      <Header />
      <div className="ml-[122px] h-14 w-[2280px] overflow-hidden bg-black pl-[1690px] text-[32px] leading-[49px] font-bold tracking-[-0.05px] whitespace-nowrap text-white">
        NFEC providing data as tool for retail outlet
      </div>
      <h1 className="mt-8 ml-[145.5px] text-[47px] leading-[58px] font-medium tracking-[-1.4px]">
        Retail Outlet Fire Extinguishers Due for Enforcement
      </h1>
      <TableCard />
      <div className="mt-auto">
        <Footer />
      </div>
    </div>
  );
}
